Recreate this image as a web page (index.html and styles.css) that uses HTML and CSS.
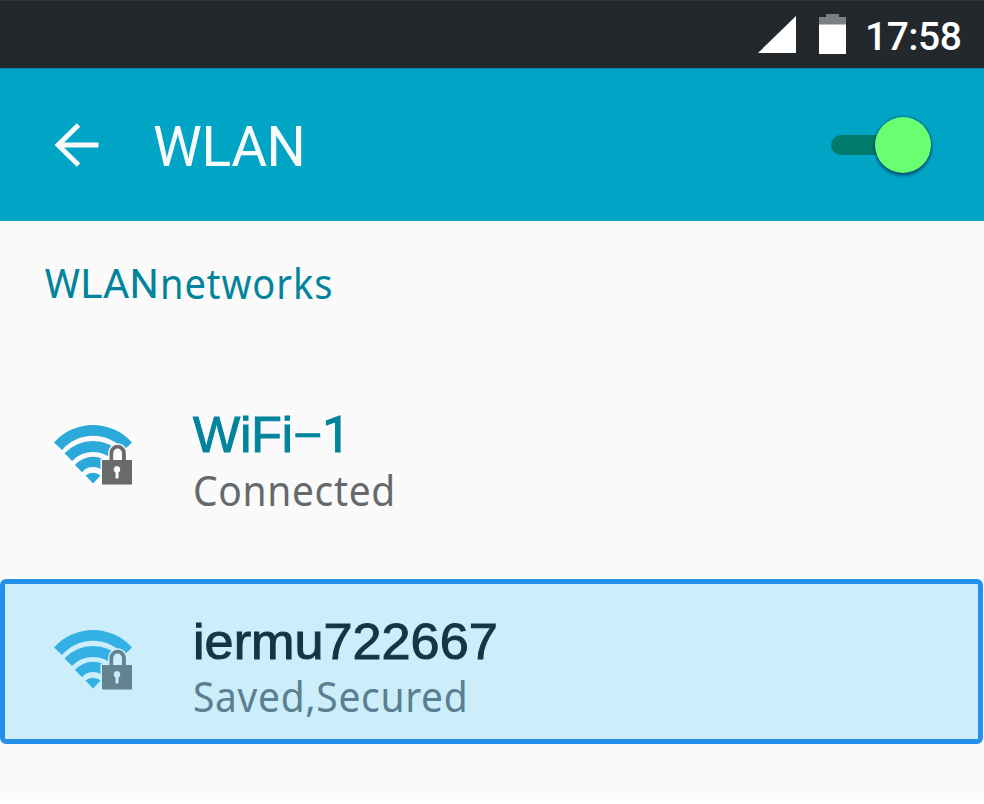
FILE: index.html
```html
<!DOCTYPE html>
<html lang="en">
<head>
<meta charset="utf-8">
<title>WLAN</title>
<link rel="stylesheet" href="styles.css">
</head>
<body>
<svg class="symbols" aria-hidden="true">
  <symbol id="wifi-lock" viewBox="0 0 80 62">
    <path class="wave" d="M0 18.5A52.2 52.2 0 0 1 78 18.5L70 26A40.8 40.8 0 0 0 8 26Z"/>
    <path class="wave" d="M10.5 29.3A39 39 0 0 1 67.5 29.3L60 37A29 29 0 0 0 18 37Z"/>
    <path class="wave" d="M21 41A24 24 0 0 1 57 41L50 48.3A14 14 0 0 0 28 48.3Z"/>
    <path class="wave" d="M31.5 51.5A11.5 11.5 0 0 1 46.5 51.5L39 59.5Z"/>
    <path class="halo" d="M46.5 60V35H54V29a9.7 9.7 0 0 1 19.4 0V35H80V60Z"/>
    <path class="lock" d="M48 36H55.5V29a8.2 8.2 0 0 1 16.4 0V36H78V60.5H48ZM59.2 36H68V29a4.4 4.4 0 0 0-8.8 0Z" fill-rule="evenodd"/>
    <path class="halo" d="M63 42a3.4 3.4 0 0 1 1.5 6.4V54.5H61.5V48.4A3.4 3.4 0 0 1 63 42Z"/>
  </symbol>
</svg>
<main class="screen">
  <header class="status">
    <svg class="signal" viewBox="0 0 38 37"><path d="M0 37L38 0V37Z" fill="#fff"/></svg>
    <svg class="battery" viewBox="0 0 27 40"><path d="M0 3H7V0H20V3H27V11H0Z" fill="#7b8082"/><path d="M0 10.5H27V40H0Z" fill="#fff"/></svg>
    <span class="clock">17:58</span>
  </header>
  <nav class="appbar">
    <svg class="back" viewBox="0 0 44 44"><path d="M23.5 2L3 22L23.5 42M2.5 22H43.5" fill="none" stroke="#fafafa" stroke-width="5"/></svg>
    <h1 class="title">WLAN</h1>
    <span class="toggle"><span class="knob"></span></span>
  </nav>
  <h2 class="section"><span class="section-a">WLAN</span><span class="section-b">networks</span></h2>
  <section class="network">
    <svg class="wifi"><use href="#wifi-lock"/></svg>
    <div class="info">
      <div class="name connected">WiFi<span class="dash">−</span><span class="digit">1</span></div>
      <div class="state">Connected</div>
    </div>
  </section>
  <section class="network selected">
    <svg class="wifi"><use href="#wifi-lock"/></svg>
    <div class="info">
      <div class="name saved">iermu722667</div>
      <div class="state secured">Saved,Secured</div>
    </div>
  </section>
</main>
</body>
</html>
```
FILE: styles.css
```css
* { box-sizing: border-box; }
body { margin: 0; background: #fff; overflow: hidden; }
.symbols { display: none; }
.screen { width: 984px; height: 799px; background: #fafafa; font-family: "Noto Sans", sans-serif; }
.status { height: 68px; background: #23282c; border-top: 1px solid #30363a; display: flex; align-items: flex-start; padding-left: 758px; }
.signal { width: 38px; height: 37px; margin-top: 15px; }
.battery { width: 27px; height: 40px; margin: 13px 0 0 23px; }
.clock { margin: 13px 0 0 19px; font: 500 39px/46px Roboto, sans-serif; letter-spacing: -.5px; color: #fff; white-space: nowrap; }
.appbar { height: 153px; background: #00a5c6; border-top: 1px solid #078ba6; display: flex; align-items: center; padding-left: 55px; }
.back { width: 44px; height: 44px; flex: none; }
.title { margin: 4px 0 0 54px; width: 621px; font: 400 55px/64px Roboto, sans-serif; letter-spacing: -.4px; color: #fafafa; }
.toggle { width: 74px; height: 20px; margin-left: 57px; border-radius: 10px; background: #007c6c; display: flex; align-items: center; justify-content: flex-end; }
.knob { width: 56px; height: 56px; border-radius: 50%; background: #69ff72; margin-right: -26px; flex: none; box-shadow: 0 0 1px 1px rgba(0,65,100,.35), 0 2px 3px 1px rgba(0,55,85,.6); }
.section { margin: 0; height: 157px; padding: 34px 0 0 44px; font-size: 41px; line-height: 56px; font-weight: 400; color: #00849c; display: flex; }
.section-a { width: 116px; padding-top: 1px; font-family: Roboto, sans-serif; }
.section-b { letter-spacing: 1px; transform: scaleX(.928); transform-origin: 0 50%; }
.network { height: 165px; margin-right: 1px; padding-left: 54px; display: flex; }
.wifi { width: 80px; height: 62px; flex: none; margin-top: 46px; --halo: #fafafa; --wave: #2ca9db; --lock: #696a6c; }
.wave { fill: var(--wave); }
.halo { fill: var(--halo); }
.lock { fill: var(--lock); }
.info { margin: 29px 0 0 59px; }
.name { height: 56px; font: 400 50px/56px "Liberation Sans", sans-serif; -webkit-text-stroke: 1px currentColor; white-space: nowrap; transform-origin: 0 50%; }
.connected { color: #00849c; }
.dash { -webkit-text-stroke-width: .5px; }
.digit { font-family: Roboto, sans-serif; }
.state { margin-top: -1px; font-size: 41px; line-height: 56px; letter-spacing: .7px; color: #66696b; white-space: nowrap; transform: scaleX(.95); transform-origin: 0 50%; }
.selected { margin-top: 36px; background: #ccedfa; border: 5px solid #2590e9; border-radius: 6px; padding-left: 49px; }
.selected .wifi { margin-top: 45px; --halo: #ccedfa; --wave: #33b1e4; --lock: #648391; }
.saved { color: #123644; transform: scaleX(1.044); padding-top: 1px; }
.secured { color: #5a7f91; }
```
